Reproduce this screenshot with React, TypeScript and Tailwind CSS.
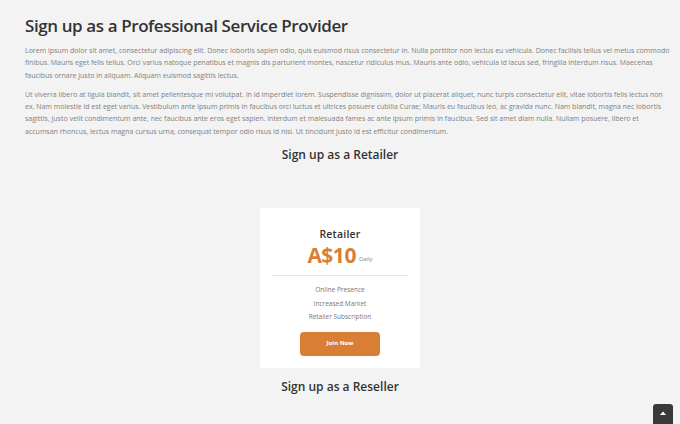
import React from "react";

const para1 =
    "Lorem ipsum dolor sit amet, consectetur adipiscing elit. Donec lobortis sapien odio, quis euismod risus consectetur in. Nulla porttitor non lectus eu vehicula. Donec facilisis tellus vel metus commodo finibus. Mauris eget felis tellus. Orci varius natoque penatibus et magnis dis parturient montes, nascetur ridiculus mus. Mauris ante odio, vehicula id lacus sed, fringilla interdum risus. Maecenas faucibus ornare justo in aliquam. Aliquam euismod sagittis lectus.";

const para2 =
    "Ut viverra libero at ligula blandit, sit amet pellentesque mi volutpat. In id imperdiet lorem. Suspendisse dignissim, dolor ut placerat aliquet, nunc turpis consectetur elit, vitae lobortis felis lectus non ex. Nam molestie id est eget varius. Vestibulum ante ipsum primis in faucibus orci luctus et ultrices posuere cubilia Curae; Mauris eu faucibus leo, ac gravida nunc. Nam blandit, magna nec lobortis sagittis, justo velit condimentum ante, nec faucibus ante eros eget sapien. Interdum et malesuada fames ac ante ipsum primis in faucibus. Sed sit amet diam nulla. Nullam posuere, libero et accumsan rhoncus, lectus magna cursus urna, consequat tempor odio risus id nisi. Ut tincidunt justo id est efficitur condimentum.";

const features = ["Online Presence", "Increased Market", "Retailer Subscription"];

const PlanCard: React.FC = () => {
    return (
        <div className="w-[160px] h-[160px] bg-white flex flex-col items-center pt-[20px]">
            <h4 className="text-[10.5px] font-semibold text-[#333] leading-[12px] tracking-[0.2px]">Retailer</h4>
            {/* Price */}
            <div className="flex items-end mt-[3px]">
                <span className="text-[21px] font-bold text-[#d97f35] leading-[24px] tracking-[-0.5px]">A$10</span>
                <span className="text-[6px] text-[#888] ml-[3px] mb-[3px]">Daily</span>
            </div>
            <div className="w-[136px] h-px bg-[#e6e6e6] mt-[8px]"></div>
            {/* Features */}
            <ul className="mt-[9px] flex flex-col items-center gap-[4px] text-[6.5px] text-[#777] leading-[9.5px]">
                {features.map((f) => (
                    <li key={f}>{f}</li>
                ))}
            </ul>
            <button className="mt-[10px] w-[80px] h-[24px] rounded-[4px] bg-[#d97f35] text-white text-[6px] font-bold">
                Join Now
            </button>
        </div>
    );
};

export default function App() {
    return (
        <div
            className="w-[680px] h-[424px] bg-[#f3f3f3] overflow-hidden relative"
            style={{fontFamily: '"Open Sans", "DejaVu Sans", sans-serif'}}
        >
            <div className="pl-[25px] pr-[10px] pt-[15px]">
                <h1 className="text-[17px] font-semibold text-[#333] leading-[22px] tracking-[-0.4px]">
                    Sign up as a Professional Service Provider
                </h1>
                <p className="mt-[8px] text-[7px] leading-[12.3px] text-[#808080]">{para1}</p>
                <p className="mt-[7px] text-[7px] leading-[12.3px] text-[#808080]">{para2}</p>
            </div>
            <h2 className="mt-[10px] text-center text-[12px] font-semibold text-[#333] leading-[14px]">
                Sign up as a Retailer
            </h2>
            <div className="flex justify-center mt-[46px]">
                <PlanCard/>
            </div>
            <h2 className="mt-[12px] text-center text-[12px] font-semibold text-[#333] leading-[14px]">
                Sign up as a Reseller
            </h2>
            {/* Scroll to top */}
            <div className="absolute left-[653px] top-[404px] w-[20px] h-[24px] bg-[#3a3a3a] rounded-[3px] flex justify-center pt-[7px]">
                <svg width="6" height="4" viewBox="0 0 6 4">
                    <path d="M0 4 L3 0.5 L6 4 Z" fill="#fff"/>
                </svg>
            </div>
        </div>
    );
}
